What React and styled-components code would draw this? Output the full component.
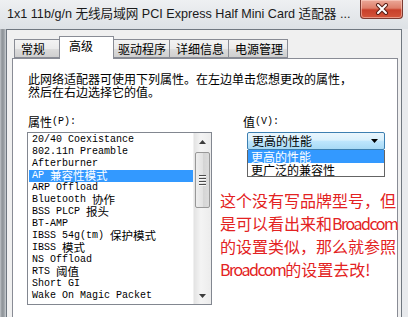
import styled, { createGlobalStyle } from 'styled-components';

const GlobalStyle = createGlobalStyle`
  html, body {
    margin: 0;
    padding: 0;
    background: #ffffff;
  }
  body {
    width: 408px;
    height: 317px;
    overflow: hidden;
    font-family: "Noto Sans CJK SC", "Noto Sans", sans-serif;
  }
`;

const tabs = [
  { label: '常规', width: 48 },
  { label: '高级', width: 55, active: true },
  { label: '驱动程序', width: 59 },
  { label: '详细信息', width: 60 },
  { label: '电源管理', width: 60 },
];

const properties = [
  { en: '20/40 Coexistance' },
  { en: '802.11n Preamble' },
  { en: 'Afterburner' },
  { en: 'AP ', zh: '兼容性模式', selected: true },
  { en: 'ARP Offload' },
  { en: 'Bluetooth ', zh: '协作' },
  { en: 'BSS PLCP ', zh: '报头' },
  { en: 'BT-AMP' },
  { en: 'IBSS 54g(tm) ', zh: '保护模式' },
  { en: 'IBSS ', zh: '模式' },
  { en: 'NS Offload' },
  { en: 'RTS ', zh: '阈值' },
  { en: 'Short GI' },
  { en: 'Wake On Magic Packet' },
];

// each line of the red remark, split so the latin word can be set tighter
const noteLines = [
  [['zh', '这个没有写品牌型号，但']],
  [['zh', '是可以看出来和'], ['en', 'Broadcom']],
  [['zh', '的设置类似，那么就参照']],
  [['en', 'Broadcom'], ['zh', '的设置去改!']],
];

function App() {
  return (
    <>
      <GlobalStyle />
      <Window>
        <TitleBar>
          <Title>1x1 11b/g/n 无线局域网 PCI Express Half Mini Card 适配器 ...</Title>
          <CloseButton>
            <svg width="16" height="12" viewBox="0 0 16 12">
              <path d="M4 2 L12 10 M12 2 L4 10" stroke="#5a2018" strokeWidth="4" strokeLinecap="round" />
              <path d="M4 2 L12 10 M12 2 L4 10" stroke="#ffffff" strokeWidth="2" strokeLinecap="round" />
            </svg>
          </CloseButton>
        </TitleBar>
        <Frame>
          <Dialog>
            <TabStrip>
              {tabs.map((tab) => (
                <Tab key={tab.label} $width={tab.width} $active={tab.active}>
                  {tab.label}
                </Tab>
              ))}
            </TabStrip>
            <Panel>
              <Description>
                此网络适配器可使用下列属性。在左边单击您想更改的属性，
                <br />
                然后在右边选择它的值。
              </Description>
              <Columns>
                <div>
                  <FieldLabel $indent={1}>
                    属性<Mono>(P):</Mono>
                  </FieldLabel>
                  <ListBox>
                    <Items>
                      {properties.map((item) => (
                        <Item key={item.en + (item.zh || '')} $selected={item.selected}>
                          <span>{item.en}</span>
                          {item.zh && <Cjk>{item.zh}</Cjk>}
                        </Item>
                      ))}
                    </Items>
                    <ScrollBar>
                      <ArrowButton>
                        <svg width="7" height="4" viewBox="0 0 7 4">
                          <path d="M0 4 L3.5 0 L7 4 Z" fill="#3c3c3c" />
                        </svg>
                      </ArrowButton>
                      <Track>
                        <Thumb>
                          <Grip />
                          <Grip />
                          <Grip />
                          <Grip />
                        </Thumb>
                      </Track>
                      <ArrowButton>
                        <svg width="7" height="4" viewBox="0 0 7 4">
                          <path d="M0 0 L7 0 L3.5 4 Z" fill="#3c3c3c" />
                        </svg>
                      </ArrowButton>
                    </ScrollBar>
                  </ListBox>
                </div>
                <RightColumn>
                  <FieldLabel $indent={23}>
                    值<Mono>(V):</Mono>
                  </FieldLabel>
                  <Combo>
                    <ComboText>更高的性能</ComboText>
                    <svg width="7" height="4" viewBox="0 0 7 4">
                      <path d="M0 0 L7 0 L3.5 4 Z" fill="#000000" />
                    </svg>
                  </Combo>
                  <DropList>
                    <DropItem $selected>更高的性能</DropItem>
                    <DropItem>更广泛的兼容性</DropItem>
                  </DropList>
                  <Note>
                    {noteLines.map((parts, i) => (
                      <NoteLine key={i}>
                        {parts.map(([kind, text]) => (
                          <NotePart key={text} $latin={kind === 'en'}>
                            {text}
                          </NotePart>
                        ))}
                      </NoteLine>
                    ))}
                  </Note>
                </RightColumn>
              </Columns>
            </Panel>
          </Dialog>
        </Frame>
      </Window>
    </>
  );
}

export default App;

const Window = styled.div`
  width: 408px;
  height: 317px;
  overflow: hidden;
  display: flex;
  flex-direction: column;
  background: linear-gradient(90deg, #c2c6ca 0px, #8e9398 2px, #9a9fa4 4px, #cdd1d5 6px, #e2e5e8 30%, #e8eaed 100%);
`;

const TitleBar = styled.div`
  height: 29px;
  flex: none;
  display: flex;
  justify-content: space-between;
  align-items: flex-start;
  padding-left: 7px;
  background: linear-gradient(180deg, #eef0f2 0%, #dde1e5 100%);
`;

const Title = styled.div`
  margin-top: 6px;
  font-family: "Liberation Sans", "Noto Sans CJK SC", sans-serif;
  font-size: 12.6px;
  line-height: 17px;
  color: #1a1a1a;
  white-space: nowrap;
`;

const CloseButton = styled.div`
  width: 43px;
  height: 19px;
  margin-right: 5px;
  display: flex;
  align-items: center;
  justify-content: center;
  box-sizing: border-box;
  border: 1px solid #7b3a31;
  border-top: none;
  border-radius: 0 0 4px 4px;
  background: linear-gradient(180deg, #eba898 0%, #de7f6b 45%, #c8402a 55%, #d4553a 100%);
  box-shadow: inset 0 0 0 1px rgba(255, 220, 210, 0.5);
`;

const Frame = styled.div`
  flex: 1;
  display: flex;
  padding: 0 7px 0 6px;
`;

const Dialog = styled.div`
  flex: 1;
  display: flex;
  flex-direction: column;
  background: #f0f0f0;
  border: 1px solid #6f7780;
  border-bottom: none;
  padding: 3px 3px 0 5px;
`;

const TabStrip = styled.div`
  height: 25px;
  display: flex;
  align-items: flex-end;
  padding-left: 2px;
`;

const Tab = styled.div`
  width: ${(p) => p.$width}px;
  height: ${(p) => (p.$active ? 23 : 19)}px;
  box-sizing: border-box;
  margin-left: ${(p) => (p.$active ? -3 : -1)}px;
  margin-right: ${(p) => (p.$active ? -2 : 0)}px;
  margin-bottom: ${(p) => (p.$active ? -1 : 0)}px;
  position: relative;
  z-index: ${(p) => (p.$active ? 2 : 1)};
  border: 1px solid #898c95;
  border-bottom: ${(p) => (p.$active ? 'none' : '1px solid #898c95')};
  background: ${(p) =>
    p.$active ? '#ffffff' : 'linear-gradient(180deg, #f3f3f3 0%, #ebebeb 50%, #dddddd 51%, #cfcfcf 100%)'};
  font-size: 12px;
  line-height: ${(p) => (p.$active ? 18 : 17)}px;
  padding-left: ${(p) => (p.$active ? 9 : 6)}px;
  color: #000000;
  white-space: nowrap;

  &:first-child {
    margin-left: 0;
  }
`;

const Panel = styled.div`
  flex: 1;
  background: #ffffff;
  border: 1px solid #898c95;
  border-bottom: none;
  padding: 13px 0 0 14px;
`;

const Description = styled.div`
  margin-left: 1px;
  font-size: 12px;
  line-height: 13px;
  color: #000000;
  white-space: nowrap;
`;

const Columns = styled.div`
  display: grid;
  grid-template-columns: 185px 1fr;
  column-gap: 8px;
  margin-top: 17px;
`;

const RightColumn = styled.div`
  display: flex;
  flex-direction: column;
  align-items: flex-start;
`;

const FieldLabel = styled.div`
  margin-left: ${(p) => p.$indent}px;
  height: 13px;
  display: flex;
  align-items: center;
  font-size: 12px;
  line-height: 13px;
  color: #000000;
  margin-bottom: 4px;
`;

const Mono = styled.span`
  font-family: "Liberation Mono", monospace;
  font-size: 10px;
  line-height: 13px;
`;

const ListBox = styled.div`
  height: 173px;
  box-sizing: border-box;
  border: 1px solid #828790;
  display: flex;
`;

const Items = styled.div`
  flex: 1;
  padding-top: 1px;
`;

const Item = styled.div`
  height: 12px;
  display: flex;
  align-items: center;
  margin-left: 1px;
  padding-left: 3px;
  font-family: "Liberation Mono", monospace;
  font-size: 10px;
  line-height: 12px;
  white-space: pre;
  color: ${(p) => (p.$selected ? '#ffffff' : '#000000')};
  background: ${(p) => (p.$selected ? '#3399ff' : 'transparent')};
`;

const Cjk = styled.span`
  font-family: "Noto Sans CJK SC", sans-serif;
  font-size: 11.5px;
  line-height: 12px;
  margin-top: -2px;
`;

const ScrollBar = styled.div`
  width: 17px;
  display: flex;
  flex-direction: column;
  background: linear-gradient(90deg, #e3e3e3 0%, #f4f4f4 40%, #ececec 100%);
  border-left: 1px solid #f0f0f0;
`;

const ArrowButton = styled.div`
  height: 17px;
  display: flex;
  align-items: center;
  justify-content: center;
`;

const Track = styled.div`
  flex: 1;
  padding-top: 2px;
`;

const Thumb = styled.div`
  height: 56px;
  margin: 0 1px;
  box-sizing: border-box;
  border: 1px solid #989898;
  border-radius: 2px;
  background: linear-gradient(90deg, #eeeeee 0%, #e2e2e2 50%, #d4d4d4 51%, #dcdcdc 100%);
  display: flex;
  flex-direction: column;
  align-items: center;
  justify-content: center;
  gap: 1px;
`;

const Grip = styled.div`
  width: 7px;
  height: 1px;
  background: #4c4c4c;
  border-bottom: 1px solid #f8f8f8;
`;

const Combo = styled.div`
  margin-left: 27px;
  width: 138px;
  height: 18px;
  box-sizing: border-box;
  border: 1px solid #3c7fb1;
  border-radius: 2px;
  background: linear-gradient(180deg, #eaf6fd 0%, #d9f0fc 45%, #bee6fd 50%, #a7d9f5 100%);
  display: flex;
  align-items: center;
  justify-content: space-between;
  padding: 0 6px 0 4px;
`;

const ComboText = styled.span`
  font-size: 12px;
  line-height: 14px;
  color: #000000;
`;

const DropList = styled.div`
  margin-left: 27px;
  width: 138px;
  box-sizing: border-box;
  border: 1px solid #646464;
  border-top: none;
  background: #ffffff;
`;

const DropItem = styled.div`
  height: 13px;
  line-height: 13px;
  padding-left: 3px;
  font-size: 12px;
  color: ${(p) => (p.$selected ? '#ffffff' : '#000000')};
  background: ${(p) => (p.$selected ? '#3399ff' : 'transparent')};
`;

const Note = styled.div`
  margin-top: 12px;
  color: #e32222;
  font-size: 16px;
  line-height: 23px;
`;

const NoteLine = styled.div`
  white-space: nowrap;
`;

const NotePart = styled.span`
  letter-spacing: ${(p) => (p.$latin ? '-1.5px' : '0')};
`;
